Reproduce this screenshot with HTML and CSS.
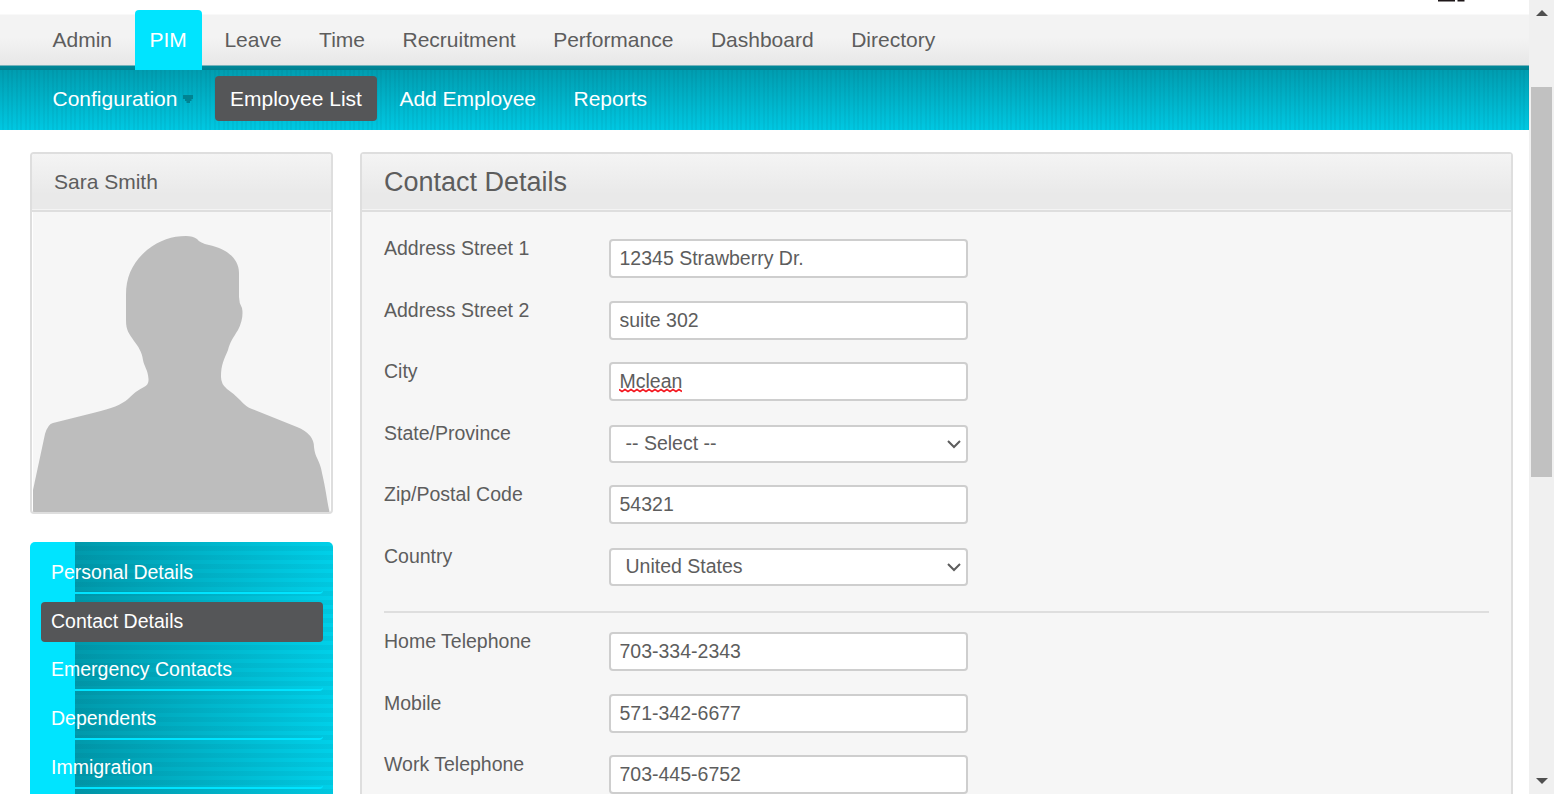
FILE: index.html
```html
<!DOCTYPE html>
<html lang="en">
<head>
<meta charset="utf-8">
<title>Contact Details</title>
<link rel="stylesheet" href="styles.css">
</head>
<body>
<div class="page">
  <main class="view">
    <div class="brand"><svg width="28" height="2" viewBox="0 0 28 2"><path fill="#1d1618" d="M0 0h17v1.6H0zM19.5 0h7v1.6h-7z"/></svg></div>
    <nav class="topnav">
      <a>Admin</a><a class="current">PIM</a><a>Leave</a><a>Time</a><a>Recruitment</a><a>Performance</a><a>Dashboard</a><a>Directory</a>
    </nav>
    <nav class="subnav">
      <a class="config">Configuration<svg width="12" height="10" viewBox="0 0 12 10"><path fill="#008392" d="M1 1h10v4H9.500v2H8v2H4.500V7H3V5H1z"/></svg></a><a class="current">Employee List</a><a>Add Employee</a><a>Reports</a>
    </nav>
    <div class="content">
      <aside class="sidebar">
        <section class="profile">
          <h2>Sara Smith</h2>
          <svg class="photo" width="297" height="300" viewBox="33 212 297 300"><path fill="#bdbdbd" d="M33 512V490L45 434Q48 424 53 423L95 412.500Q119 407 128 399Q137 390 144 387Q149 385 148.500 379C148 370 144 366 143 360C142 352 138 346 134 341C129 333 126 331 126 320V295C126 276 133 262 147 250C160 240 172 236 186 236Q193 236 197 239Q200 243 209 245C224 248 239 257 239 273V297Q239 303 242 308Q244 318 238 330C233 338 230 342 228 350C224 360 221 364 221 377Q221 384 227 389Q233 393 240 400Q246 407 252 409L297 427Q314 434 314 447C315 458 320 460 322 473C326 490 327 501 329.500 512Z"/></svg>
        </section>
        <nav class="sidenav">
          <a>Personal Details</a><a class="current">Contact Details</a><a>Emergency Contacts</a><a>Dependents</a><a>Immigration</a><a></a>
        </nav>
      </aside>
      <section class="details">
        <h1>Contact Details</h1>
        <form class="form">
          <div class="row"><label>Address Street 1</label><div class="field"><input value="12345 Strawberry Dr."></div></div>
          <div class="row"><label>Address Street 2</label><div class="field"><input value="suite 302"></div></div>
          <div class="row"><label>City</label><div class="field"><input value="Mclean"><svg class="squiggle" width="63" height="5" viewBox="0 0 63 5"><path fill="none" stroke="#f41820" stroke-width="1.600" d="M0 1.500l3 2 3-2 3 2 3-2 3 2 3-2 3 2 3-2 3 2 3-2 3 2 3-2 3 2 3-2 3 2 3-2 3 2 3-2 3 2 3-2 3 2"/></svg></div></div>
          <div class="row"><label>State/Province</label><div class="field"><div class="select">-- Select --<svg width="14" height="9" viewBox="0 0 14 9"><path fill="none" stroke="#5d5d5d" stroke-width="2" d="M1 1l6 6 6-6"/></svg></div></div></div>
          <div class="row"><label>Zip/Postal Code</label><div class="field"><input value="54321"></div></div>
          <div class="row"><label>Country</label><div class="field"><div class="select">United States<svg width="14" height="9" viewBox="0 0 14 9"><path fill="none" stroke="#5d5d5d" stroke-width="2" d="M1 1l6 6 6-6"/></svg></div></div></div>
          <hr>
          <div class="row"><label>Home Telephone</label><div class="field"><input value="703-334-2343"></div></div>
          <div class="row"><label>Mobile</label><div class="field"><input value="571-342-6677"></div></div>
          <div class="row"><label>Work Telephone</label><div class="field"><input value="703-445-6752"></div></div>
        </form>
      </section>
    </div>
  </main>
  <div class="scrollbar">
    <svg width="12" height="6" viewBox="0 0 12 6"><path fill="#505050" d="M0 6L6 0l6 6z"/></svg>
    <div class="thumb"></div>
    <svg class="down" width="12" height="6" viewBox="0 0 12 6"><path fill="#505050" d="M0 0h12L6 6z"/></svg>
  </div>
</div>
</body>
</html>
```
FILE: styles.css
```css
* { box-sizing: border-box; }
body { margin: 0; font-family: "Liberation Sans", Arial, sans-serif; font-size: 19.5px; color: #5d5d5d; background: #fff; overflow: hidden; }
.page { display: flex; width: 1554px; height: 794px; overflow: hidden; }
.view { width: 1529px; height: 794px; overflow: hidden; }
.brand { height: 14px; padding-left: 1438px; }
.brand svg { display: block; }

.topnav { display: flex; gap: 7.5px; height: 56px; padding-left: 37.5px; font-size: 21px; background: linear-gradient(#f9f9f9 0 1px, #f3f3f3 1px 24px, #e7e7e7 51px, #76b3bb 51px 52px, #00899a 52px, #007f8e 56px); }
.topnav a { height: 60px; margin-top: -4px; padding: 0 15px; line-height: 60px; }
.topnav .current { background: #00e4ff; color: #fff; border-radius: 4px 4px 0 0; }

.subnav { display: flex; gap: 7.5px; height: 60px; padding: 6px 0 0 37.5px; font-size: 21px; color: #fff; background: repeating-linear-gradient(90deg, transparent 0 2.25px, rgba(0, 60, 80, .06) 2.25px 4.5px), linear-gradient(#009db0, #00c8e2); }
.subnav a { height: 45px; padding: 0 15px; line-height: 46px; border-radius: 4px; }
.subnav .current { background: #555658; }
.subnav .config { display: flex; align-items: center; width: 170px; white-space: nowrap; }
.config svg { margin-left: 5px; flex: none; }

.content { display: flex; gap: 27px; padding: 22px 0 0 30px; }
.sidebar { width: 303px; }
h1, h2 { margin: 0; padding-left: 22px; height: 58px; font-weight: 400; background: linear-gradient(#f4f4f4, #e9e9e9 40px, #e9e9e9 55px, #f4f4f4 55px 56px, #dedede 56px); }
h1 { font-size: 27px; line-height: 56px; }
h2 { font-size: 21px; line-height: 56px; }
.profile { height: 362px; border: 2px solid #dedede; border-radius: 4px; overflow: hidden; }
.photo { display: block; margin-left: 1px; background: #f6f6f6; }

.sidenav { height: 400px; margin-top: 28px; padding: 10.9px 10px 0 11px; border-radius: 5px; color: #fff; background: linear-gradient(90deg, #00e4ff 45px, transparent 45px), repeating-linear-gradient(transparent 0 4.5px, rgba(0, 60, 80, .06) 4.5px 9px), linear-gradient(90deg, #0099ab 45px, #00d0e9); }
.sidenav a { display: block; height: 40.85px; margin-bottom: 7.9px; padding-left: 10px; line-height: 38px; border-bottom: 2px solid #00e4ff; border-radius: 0 0 4px 0; }
.sidenav .current { height: 40px; margin-bottom: 8.75px; background: #555658; border: 0; border-radius: 4px; }

.details { width: 1153px; height: 700px; border: 2px solid #dedede; border-radius: 4px; background: #f6f6f6; }
.form { padding: 27px 22px 0; }
.row { display: flex; height: 61.5px; }
.row label { width: 225px; line-height: 18px; }
.field { position: relative; width: 359px; }
input { display: block; width: 359px; height: 39px; padding: 0 8.5px; border: 2px solid #cecece; border-radius: 4px; background: #fff; color: #5d5d5d; font: 19.5px "Liberation Sans", Arial, sans-serif; outline: 0; }
.squiggle { position: absolute; left: 10px; top: 26px; }
.select { display: flex; align-items: center; justify-content: space-between; height: 38px; margin-top: 1.5px; padding: 0 5px 2px 14.5px; border: 2px solid #cecece; border-radius: 4px; background: #fff; }
.select svg { margin-top: 2px; }
hr { height: 2px; margin: 3px 0 19px; border: 0; background: #dedede; }

.scrollbar { width: 25px; height: 794px; padding: 10px 2px 0; background: #f0f0f0; }
.scrollbar svg { display: block; margin: 0 0 71px 5px; }
.thumb { width: 21px; height: 390px; background: #c1c1c1; }
.scrollbar .down { margin: 301px 0 0 5px; }
```
